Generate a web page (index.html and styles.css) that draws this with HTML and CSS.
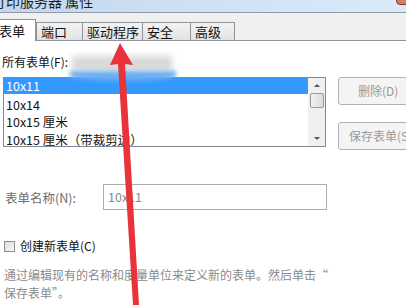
FILE: index.html
```html
<!DOCTYPE html>
<html>
<head>
<meta charset="utf-8">
<link rel="stylesheet" href="styles.css">
</head>
<body>
<div class="window">
  <div class="titlebar">
    <span class="title">打印服务器 属性</span>
    <span class="close"></span>
  </div>
  <div class="tabs">
    <div class="tab active">表单</div>
    <div class="tab t-port">端口</div>
    <div class="tab t-drv">驱动程序</div>
    <div class="tab t-sec">安全</div>
    <div class="tab t-adv">高级</div>
  </div>
  <div class="panel">
    <div class="lbl-all">所有表单(F):</div>
    <div class="list-row">
      <div class="listbox">
        <div class="items">
          <div class="item sel">10x11</div>
          <div class="item">10x14</div>
          <div class="item">10x15 厘米</div>
          <div class="item">10x15 厘米（带裁剪边）</div>
        </div>
        <div class="scrollbar">
          <div class="arrow up"></div>
          <div class="thumb"></div>
          <div class="track"></div>
          <div class="arrow down"></div>
        </div>
      </div>
      <div class="buttons">
        <div class="btn btn-del">删除(D)</div>
        <div class="btn btn-save">保存表单(S)</div>
      </div>
    </div>
    <div class="name-row">
      <span class="name-lbl">表单名称(N):</span>
      <div class="input">10x11</div>
    </div>
    <div class="check-row">
      <span class="checkbox"></span>
      <span class="check-lbl">创建新表单(C)</span>
    </div>
    <div class="note">通过编辑现有的名称和度量单位来定义新的表单。然后单击“<br>保存表单”。</div>
  </div>
  <div class="blur-grey"></div>
  <div class="blur-blue"></div>
  <svg class="arrow-overlay" width="406" height="305" viewBox="0 0 406 305">
    <polygon points="120,43 133,65 125,64 139,305 133,305 118,64 110,65" fill="#e8333b"/>
  </svg>
</div>
</body>
</html>
```

FILE: styles.css
```css
html, body {
  margin: 0;
  padding: 0;
}
body {
  width: 406px;
  height: 305px;
  overflow: hidden;
  background: #ffffff;
  font-family: "Noto Sans CJK SC", "Noto Sans", sans-serif;
  color: #1a1a1a;
}
.window {
  position: relative;
  width: 406px;
  height: 305px;
  overflow: hidden;
}
.titlebar {
  height: 12px;
  background: linear-gradient(to right, #c2d7ee 0%, #cfe1f4 50%, #dbeafa 100%);
  border-bottom: 1px solid #8d9bab;
  position: relative;
  overflow: hidden;
}
.title {
  display: block;
  margin-left: -8px;
  margin-top: -8px;
  font-size: 14px;
  line-height: 18px;
  color: #1e1e1e;
}
.close {
  position: absolute;
  right: -12px;
  top: -12px;
  width: 20px;
  height: 15px;
  border: 1px solid #8a3a2c;
  border-radius: 4px;
  background: #d67a66;
}
.tabs {
  height: 27px;
  background: #f0f0f0;
  display: flex;
  align-items: flex-end;
  position: relative;
}
.tab {
  box-sizing: border-box;
  height: 18px;
  border: 1px solid #8e939c;
  border-bottom: none;
  background: linear-gradient(#f3f3f3, #e2e2e2);
  font-size: 13px;
  line-height: 17px;
  padding-left: 4px;
  color: #111;
  margin-left: -1px;
  flex-shrink: 0;
}
.tab.active {
  width: 38px;
  height: 22px;
  margin-left: -2px;
  background: #ffffff;
  padding-left: 0;
  padding-top: 2px;
  position: relative;
  z-index: 2;
  margin-bottom: -1px;
}
.t-port { width: 47px; margin-left: 0; padding-left: 4px; }
.t-drv { width: 61px; }
.t-sec { width: 49px; }
.t-adv { width: 45px; }
.panel {
  border-top: 1px solid #8e939c;
  background: #ffffff;
  padding: 13px 0 0 2px;
  font-size: 12px;
  position: relative;
}
.lbl-all {
  line-height: 16px;
  color: #111;
}
.list-row {
  display: flex;
  margin-top: 7px;
}
.listbox {
  box-sizing: border-box;
  flex-shrink: 0;
  margin-left: 1px;
  width: 323px;
  height: 70px;
  border: 1px solid #828790;
  display: flex;
}
.items {
  flex: 1;
}
.item {
  height: 17.5px;
  line-height: 17px;
  padding-left: 2px;
  font-size: 12.5px;
  color: #141414;
  white-space: nowrap;
}
.item.sel {
  background: #3399ff;
  color: #ffffff;
  height: 16px;
  line-height: 16px;
  margin-bottom: 1.5px;
}
.scrollbar {
  width: 17px;
  background: #f0f0f0;
  display: flex;
  flex-direction: column;
  align-items: center;
}
.arrow {
  width: 0;
  height: 0;
  border-left: 3px solid transparent;
  border-right: 3px solid transparent;
}
.arrow.up {
  margin-top: 6px;
  border-bottom: 3px solid #555;
}
.arrow.down {
  margin-bottom: 6px;
  border-top: 3px solid #555;
}
.thumb {
  box-sizing: border-box;
  margin-top: 6px;
  width: 14px;
  height: 15px;
  border: 1px solid #9a9a9a;
  border-radius: 2px;
  background: linear-gradient(to right, #f0f0f0, #dcdcdc);
}
.track { flex: 1; }
.buttons {
  display: flex;
  flex-direction: column;
  gap: 17px;
  margin-left: 12px;
  flex-shrink: 0;
}
.btn {
  box-sizing: border-box;
  height: 28px;
  border: 1px solid #adb2b5;
  border-radius: 3px;
  background: #f4f4f4;
  color: #9a9a9a;
  font-size: 12px;
  line-height: 26px;
  white-space: nowrap;
}
.btn-del { width: 80px; padding-left: 19px; }
.btn-save { width: 90px; padding-left: 10px; }
.name-row {
  display: flex;
  align-items: center;
  margin-top: 34px;
  padding-left: 3px;
}
.name-lbl {
  width: 98px;
  color: #6e6e6e;
  font-size: 12.5px;
}
.input {
  box-sizing: border-box;
  width: 224px;
  height: 26px;
  border: 1px solid #adadad;
  padding-left: 4px;
  line-height: 24px;
  font-size: 12.5px;
  color: #8a8a8a;
}
.check-row {
  display: flex;
  align-items: center;
  margin-top: 28px;
  padding-left: 2px;
}
.checkbox {
  box-sizing: border-box;
  width: 11px;
  height: 11px;
  border: 1px solid #8f8f8f;
  background: linear-gradient(135deg, #dcdcdc, #f6f6f6);
  margin-right: 5px;
}
.check-lbl {
  color: #111;
  line-height: 16px;
}
.note {
  margin-top: 12px;
  padding-left: 2px;
  color: #8a8a8a;
  line-height: 18px;
}
.blur-grey {
  position: absolute;
  left: 72px;
  top: 56px;
  width: 100px;
  height: 15px;
  background: #d8d8d8;
  filter: blur(3px);
}
.blur-blue {
  position: absolute;
  left: 70px;
  top: 71px;
  width: 106px;
  height: 10px;
  border-radius: 0 0 50% 50%;
  background: #6aaef2;
  filter: blur(2px);
}
.arrow-overlay {
  position: absolute;
  left: 0;
  top: 0;
}
```
